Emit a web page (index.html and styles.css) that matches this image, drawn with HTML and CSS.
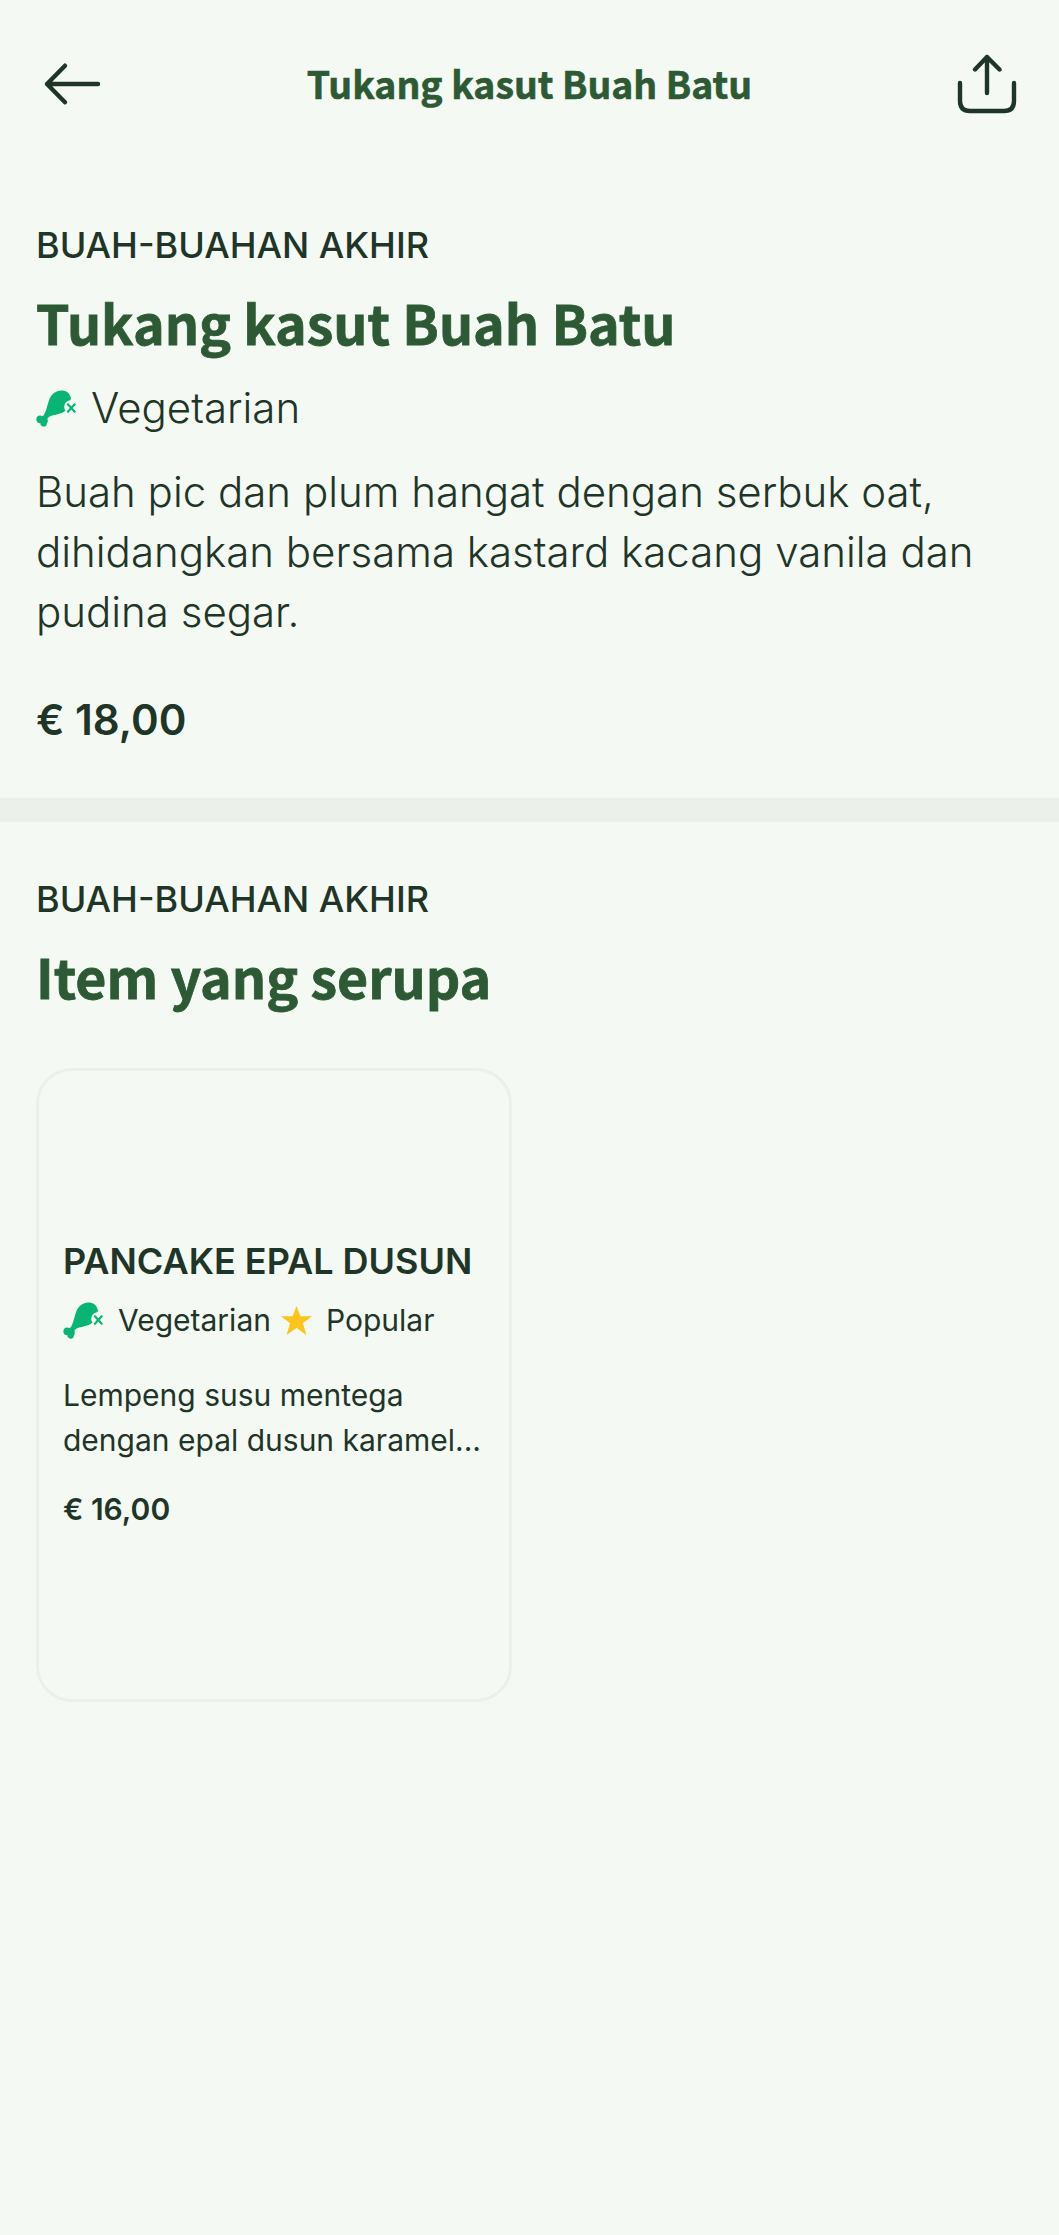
FILE: index.html
```html
<!DOCTYPE html>
<html lang="ms">
<head>
<meta charset="utf-8">
<title>Tukang kasut Buah Batu</title>
<link rel="stylesheet" href="styles.css">
</head>
<body>
<svg class="sprite" aria-hidden="true">
  <symbol id="drumstick" viewBox="41 35 119 109">
    <path d="M117 36C131 35 143 46 145 60C145 63 143 65 140 66C131 68 125 75 125 84C125 89 126 92 129 95C122 104 110 105 100 108C88 110 80 113 75 119C77 126 76 132 73 134C74 140 68 145 61 143C55 141 54 138 54 133C48 134 42 130 42 122C42 114 49 109 56 111C60 113 62 112 65 108C71 98 73 85 78 70C84 50 96 37 117 36Z" fill="#08b574"/>
    <path d="M136 77L156 99M156 77L136 99" stroke="#08b574" stroke-width="6.5" stroke-linecap="round"/>
  </symbol>
</svg>
<header class="topbar">
  <svg class="icon-back" viewBox="0 0 60 48" fill="none" stroke="#1f3527" stroke-width="4.4" stroke-linecap="round" stroke-linejoin="round"><path d="M56 24H5M23 5.7L5 24L23 42.3"/></svg>
  <div class="topbar-title">Tukang kasut Buah Batu</div>
  <svg class="icon-share" viewBox="0 0 60 60" fill="none" stroke="#1f3527" stroke-width="4.4" stroke-linecap="round" stroke-linejoin="round"><path d="M30 39V3M18 15.5L30 3L42.5 15.5M3 29V47Q3 57 13 57H47Q57 57 57 47V29"/></svg>
</header>
<section class="detail">
  <div class="kicker">BUAH-BUAHAN AKHIR</div>
  <h1 class="heading">Tukang kasut Buah Batu</h1>
  <div class="diet"><svg class="icon-diet"><use href="#drumstick"/></svg><span>Vegetarian</span></div>
  <p class="description">Buah pic dan plum hangat dengan serbuk oat,<br>dihidangkan bersama kastard kacang vanila dan<br>pudina segar.</p>
  <div class="price">€ 18,00</div>
</section>
<section class="similar">
  <div class="kicker">BUAH-BUAHAN AKHIR</div>
  <h2 class="heading">Item yang serupa</h2>
  <article class="card">
    <h3 class="card-title">PANCAKE EPAL DUSUN</h3>
    <div class="tags">
      <svg class="icon-diet"><use href="#drumstick"/></svg><span class="tag-diet">Vegetarian</span>
      <svg class="icon-star" viewBox="0 0 30 28"><path d="M15 0L18.8 10H30L21.2 16.6L24.6 28L15 21.2L5.4 28L8.8 16.6L0 10H11.2Z" fill="#fdc41c"/></svg><span>Popular</span>
    </div>
    <p class="card-text">Lempeng susu mentega<br>dengan epal dusun karamel...</p>
    <div class="card-price">€ 16,00</div>
  </article>
</section>
</body>
</html>
```
FILE: styles.css
```css
* { box-sizing: border-box; margin: 0; padding: 0; }
body { background: #f4f9f3; color: #1f3527; font-family: "Inter", sans-serif; min-height: 2235px; }
.sprite { display: block; width: 0; height: 0; }
.topbar { display: flex; align-items: center; justify-content: space-between; height: 167px; padding: 0 42px; }
.icon-back { width: 60px; height: 48px; }
.icon-share { width: 60px; height: 60px; }
.topbar-title, .heading { font-family: "Noto Sans CJK SC", sans-serif; font-weight: 700; color: #2d5a35; }
.topbar-title { font-size: 37.4px; line-height: 60px; padding-bottom: 1px; -webkit-text-stroke: 0.6px #2d5a35; }
.detail { padding: 54px 36px 48px; }
.similar { padding: 53px 36px 0; border-top: 24px solid #ebf1ea; }
.kicker { font-size: 36px; line-height: 48px; font-weight: 500; margin-bottom: 20px; }
.heading { font-size: 53.7px; line-height: 66px; -webkit-text-stroke: 0.8px #2d5a35; }
.diet { display: flex; align-items: center; gap: 15px; margin: 23px 0 24px; font-size: 42px; line-height: 60px; font-weight: 300; }
.icon-diet { width: 40px; height: 37px; flex: none; }
.description { font-size: 42px; line-height: 60px; font-weight: 300; }
.price { margin-top: 48px; font-size: 42px; line-height: 60px; font-weight: 600; }
.card { width: 476px; height: 634px; margin-top: 59px; padding: 166px 24px 0; border: 3px solid #ebf1ea; border-radius: 36px; white-space: nowrap; }
.card-title { font-size: 36px; line-height: 48px; font-weight: 600; }
.tags { display: flex; align-items: center; margin: 13px 0 30px; font-size: 30px; line-height: 45px; }
.tag-diet { margin: 0 10px 0 15px; }
.icon-star { width: 31px; height: 29px; margin-right: 14px; flex: none; }
.card-text { font-size: 30px; line-height: 45px; }
.card-price { margin-top: 24px; font-size: 30px; line-height: 45px; font-weight: 600; }
```
